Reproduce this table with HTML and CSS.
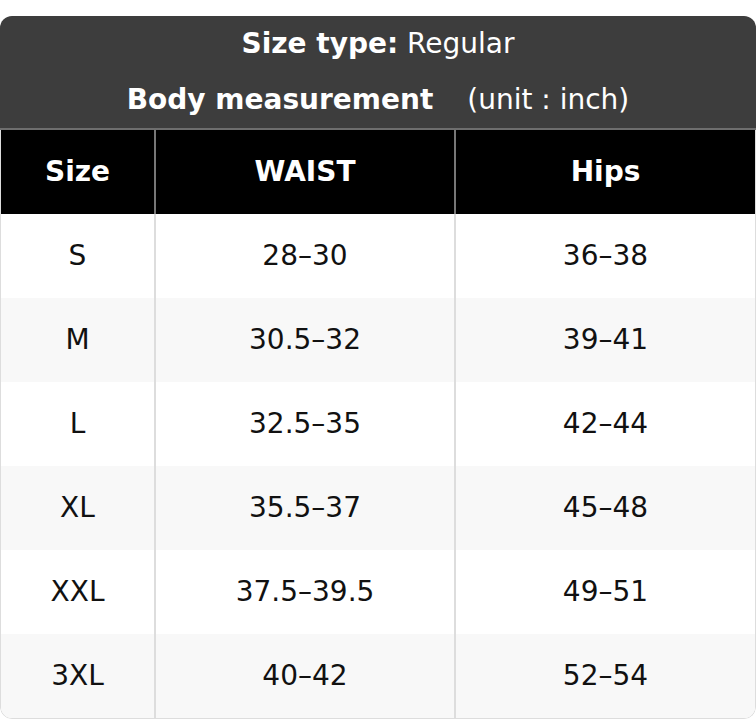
FILE: index.html
```html
<!DOCTYPE html>
<html>
<head>
<meta charset="utf-8">
<link rel="stylesheet" href="styles.css">
</head>
<body>
<div class="chart">
  <div class="title">
    <div class="title-line"><b>Size type:</b>&nbsp;Regular</div>
    <div class="title-line"><b>Body measurement</b><span class="unit">(unit : inch)</span></div>
  </div>
  <div class="table-wrap">
    <table class="sizes">
      <colgroup><col class="c1"><col class="c2"><col class="c3"></colgroup>
      <thead>
        <tr><th>Size</th><th>WAIST</th><th>Hips</th></tr>
      </thead>
      <tbody>
        <tr><td>S</td><td>28–30</td><td>36–38</td></tr>
        <tr><td>M</td><td>30.5–32</td><td>39–41</td></tr>
        <tr><td>L</td><td>32.5–35</td><td>42–44</td></tr>
        <tr><td>XL</td><td>35.5–37</td><td>45–48</td></tr>
        <tr><td>XXL</td><td>37.5–39.5</td><td>49–51</td></tr>
        <tr><td>3XL</td><td>40–42</td><td>52–54</td></tr>
      </tbody>
    </table>
  </div>
</div>
</body>
</html>
```
FILE: styles.css
```css
html, body {
  margin: 0;
  padding: 0;
  background: #ffffff;
}
body {
  font-family: "DejaVu Sans", sans-serif;
  font-size: 28px;
  color: #111111;
}
.chart {
  margin-top: 16px;
  width: 756px;
  border-radius: 12px;
  overflow: hidden;
}
.title {
  background: #3d3d3d;
  color: #ffffff;
  border-bottom: 2px solid #6e6e6e;
}
.title-line {
  height: 56px;
  display: flex;
  align-items: center;
  justify-content: center;
  padding-bottom: 1px;
  box-sizing: border-box;
}
.unit {
  margin-left: 34px;
}
.table-wrap {
  border: 1.5px solid #dddddd;
  border-top: 0;
  border-radius: 0 0 12px 12px;
  overflow: hidden;
}
.sizes {
  width: 100%;
  border-collapse: collapse;
  table-layout: fixed;
}
.c1 { width: 154px; }
.c2 { width: 300px; }
.sizes th {
  background: #000000;
  color: #ffffff;
  font-weight: bold;
  height: 82px;
  padding: 0 0 2px;
  text-align: center;
}
.sizes th + th {
  border-left: 2px solid #777777;
}
.sizes td {
  height: 83px;
  padding: 0 0 1px;
  text-align: center;
}
.sizes td + td {
  border-left: 2px solid #dddddd;
}
.sizes tbody tr:nth-child(even) td {
  background: #f8f8f8;
}
```
